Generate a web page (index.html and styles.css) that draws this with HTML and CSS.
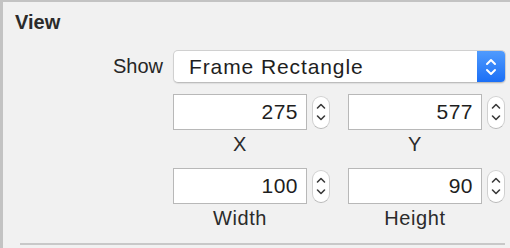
FILE: index.html
```html
<!DOCTYPE html>
<html lang="en">
<head>
  <meta charset="UTF-8" />
  <title>View Inspector</title>
  <link rel="stylesheet" href="styles.css">
</head>
<body>

<div class="panel">
  <div class="title">View</div>

  <div class="row-show">
    <span class="label">Show</span>
    <div class="select">
      <span class="select-text">Frame Rectangle</span>
      <span class="select-arrows">
        <svg width="14" height="22" viewBox="0 0 14 22">
          <path d="M3 8 L7 4 L11 8 M3 14 L7 18 L11 14" fill="none" stroke="#fff" stroke-width="2" stroke-linecap="round" stroke-linejoin="round"/>
        </svg>
      </span>
    </div>
  </div>

  <!-- Frame -->
  <div class="grid">
    <div class="cell">
      <div class="pair">
        <div class="field">275</div>
        <div class="stepper">
          <svg width="12" height="26" viewBox="0 0 12 26">
            <path d="M2.5 9 L6 5.5 L9.5 9 M2.5 17 L6 20.5 L9.5 17" fill="none" stroke="#3a3a3a" stroke-width="1.6" stroke-linecap="round" stroke-linejoin="round"/>
          </svg>
        </div>
      </div>
      <div class="cap">X</div>
    </div>
    <div class="cell">
      <div class="pair">
        <div class="field">577</div>
        <div class="stepper">
          <svg width="12" height="26" viewBox="0 0 12 26">
            <path d="M2.5 9 L6 5.5 L9.5 9 M2.5 17 L6 20.5 L9.5 17" fill="none" stroke="#3a3a3a" stroke-width="1.6" stroke-linecap="round" stroke-linejoin="round"/>
          </svg>
        </div>
      </div>
      <div class="cap">Y</div>
    </div>
    <div class="cell">
      <div class="pair">
        <div class="field">100</div>
        <div class="stepper">
          <svg width="12" height="26" viewBox="0 0 12 26">
            <path d="M2.5 9 L6 5.5 L9.5 9 M2.5 17 L6 20.5 L9.5 17" fill="none" stroke="#3a3a3a" stroke-width="1.6" stroke-linecap="round" stroke-linejoin="round"/>
          </svg>
        </div>
      </div>
      <div class="cap">Width</div>
    </div>
    <div class="cell">
      <div class="pair">
        <div class="field">90</div>
        <div class="stepper">
          <svg width="12" height="26" viewBox="0 0 12 26">
            <path d="M2.5 9 L6 5.5 L9.5 9 M2.5 17 L6 20.5 L9.5 17" fill="none" stroke="#3a3a3a" stroke-width="1.6" stroke-linecap="round" stroke-linejoin="round"/>
          </svg>
        </div>
      </div>
      <div class="cap">Height</div>
    </div>
  </div>

  <div class="separator"></div>
</div>

</body>
</html>
```

FILE: styles.css
```css
body {
  margin: 0;
  font-family: "Liberation Sans", Arial, sans-serif;
  background: #f1f1f1;
  color: #262626;
}
.panel {
  height: 246px;
  border-top: 2px solid #c3c3c3;
  border-left: 3px solid #c3c3c3;
  background: #f1f1f1;
  overflow: hidden;
}
.title {
  font-size: 20px;
  font-weight: bold;
  line-height: 24px;
  padding: 8px 0 0 12px;
  color: #2b2b2b;
}
.row-show {
  display: flex;
  align-items: center;
  margin-top: 16px;
  padding-left: 108px;
}
.label {
  font-size: 20px;
  width: 52px;
  text-align: right;
  margin-right: 10px;
}
.select {
  width: 333px;
  height: 33px;
  box-sizing: border-box;
  display: flex;
  background: #fff;
  border: 1px solid #d0d0d0;
  border-bottom-color: #bdbdbd;
  border-radius: 5px;
  box-shadow: 0 1px 1px rgba(0, 0, 0, 0.08);
  overflow: hidden;
}
.select-text {
  flex: 1;
  font-size: 21px;
  line-height: 31px;
  padding-left: 15px;
  letter-spacing: 0.9px;
  color: #1e1e1e;
}
.select-arrows {
  width: 28px;
  display: flex;
  align-items: center;
  justify-content: center;
  background: linear-gradient(#509bfd, #1b6ff6);
}
.grid {
  display: grid;
  grid-template-columns: 175px 160px;
  row-gap: 10px;
  margin: 11px 0 0 170px;
}
.pair {
  display: flex;
  align-items: center;
}
.field {
  width: 134px;
  height: 36px;
  box-sizing: border-box;
  background: #fff;
  border: 1px solid #b8b8b8;
  text-align: right;
  font-size: 21px;
  line-height: 34px;
  padding-right: 8px;
  letter-spacing: 0.5px;
  color: #1e1e1e;
}
.stepper {
  width: 18px;
  height: 33px;
  box-sizing: border-box;
  margin-left: 5px;
  background: #fff;
  border: 1px solid #d0d0d0;
  border-bottom-color: #b8b8b8;
  border-radius: 9px;
  display: flex;
  align-items: center;
  justify-content: center;
}
.cap {
  width: 134px;
  text-align: center;
  font-size: 20px;
  line-height: 28px;
  letter-spacing: 0.6px;
  color: #2b2b2b;
}
.separator {
  height: 2px;
  background: #c8c8c8;
  margin: 11px 5px 0 17px;
}
```
